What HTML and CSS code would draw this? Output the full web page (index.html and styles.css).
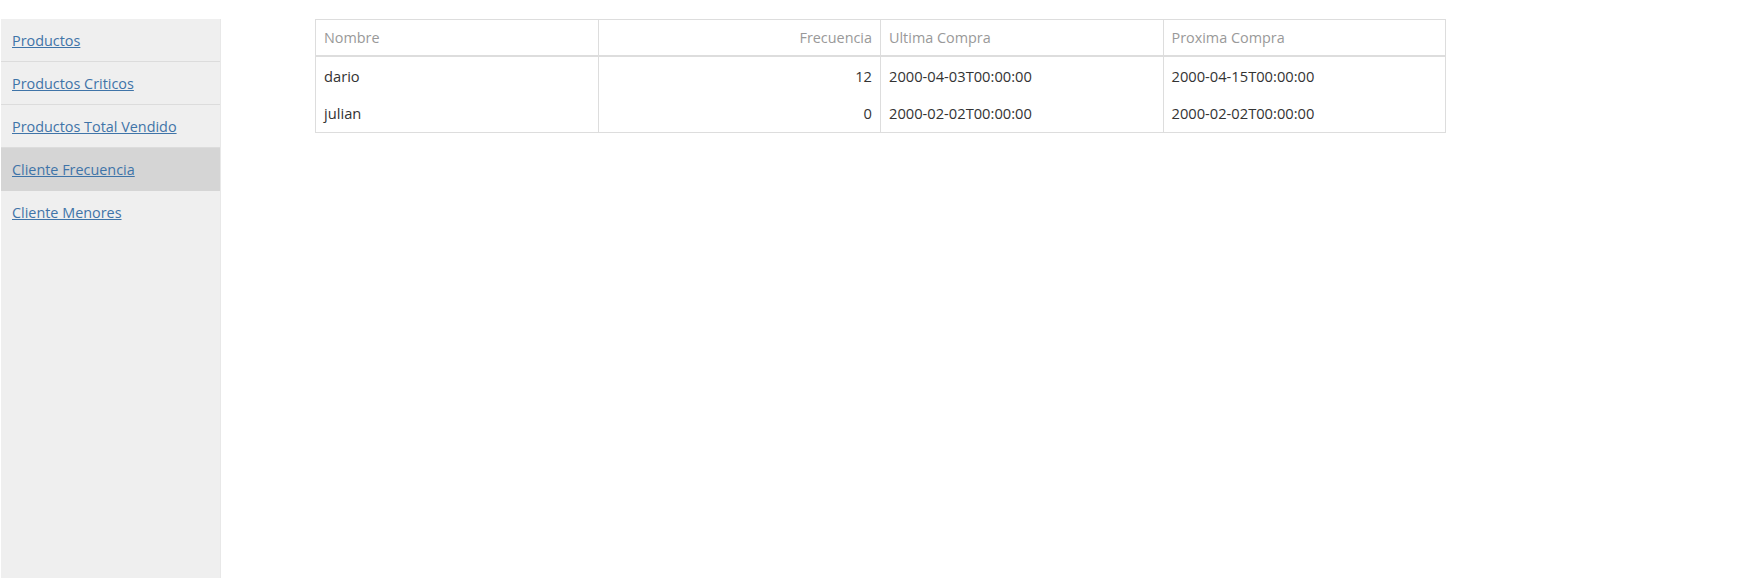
FILE: index.html
```html
<!DOCTYPE html>
<html>
<head>
<meta charset="utf-8">
<link rel="stylesheet" href="styles.css">
</head>
<body>
<div class="layout">
  <nav class="sidebar">
    <div class="nav-item"><a href="#">Productos</a></div>
    <div class="nav-item"><a href="#">Productos Criticos</a></div>
    <div class="nav-item"><a href="#">Productos Total Vendido</a></div>
    <div class="nav-item active"><a href="#">Cliente Frecuencia</a></div>
    <div class="nav-item last"><a href="#">Cliente Menores</a></div>
  </nav>
  <main class="content">
    <table class="grid">
      <thead>
        <tr>
          <th>Nombre</th>
          <th class="num">Frecuencia</th>
          <th>Ultima Compra</th>
          <th>Proxima Compra</th>
        </tr>
      </thead>
      <tbody>
        <tr>
          <td>dario</td>
          <td class="num">12</td>
          <td>2000-04-03T00:00:00</td>
          <td>2000-04-15T00:00:00</td>
        </tr>
        <tr>
          <td>julian</td>
          <td class="num">0</td>
          <td>2000-02-02T00:00:00</td>
          <td>2000-02-02T00:00:00</td>
        </tr>
      </tbody>
    </table>
  </main>
</div>
</body>
</html>
```

FILE: styles.css
```css
html, body {
  margin: 0;
  padding: 0;
  background: #fff;
  font-family: "Open Sans", "Noto Sans", "DejaVu Sans", sans-serif;
  font-size: 14.4px;
  color: #333;
}

.layout {
  display: flex;
  align-items: stretch;
  padding-top: 19px;
  min-height: 559px;
}

.sidebar {
  width: 219px;
  margin-left: 1px;
  background: #efefef;
  border-right: 1px solid #e8e8e8;
  flex-shrink: 0;
}

.nav-item {
  height: 42px;
  border-bottom: 1px solid #dcdcdc;
  padding-left: 11px;
  display: flex;
  align-items: center;
}

.nav-item.active {
  background: #d5d5d5;
  border-bottom-color: #d5d5d5;
}

.nav-item.last {
  border-bottom-color: transparent;
}

.nav-item a {
  color: #3f74a8;
  text-decoration: underline;
  font-size: 14.4px;
}

.content {
  margin-left: 94px;
}

.grid {
  width: 1131px;
  border-collapse: collapse;
  table-layout: fixed;
  border: 1px solid #dddddd;
}

.grid th {
  font-weight: normal;
  color: #999;
  text-align: left;
  height: 35px;
  padding: 0 8px;
  border-left: 1px solid #dddddd;
  border-bottom: 2px solid #dddddd;
}

.grid td {
  height: 37.5px;
  padding: 0 8px;
  border-left: 1px solid #dddddd;
  color: #333;
  font-size: 14.7px;
}

.grid .num {
  text-align: right;
}
```
